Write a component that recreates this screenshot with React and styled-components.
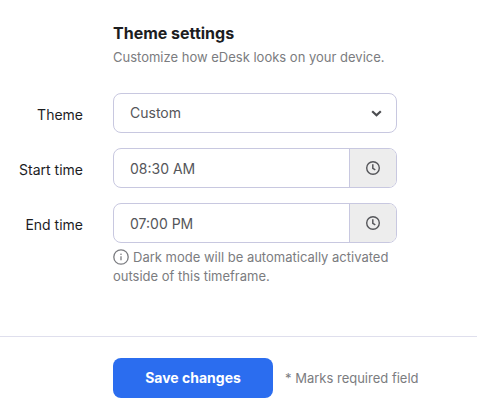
import React, { useState } from "react";
import styled, { createGlobalStyle } from "styled-components";

const GlobalStyle = createGlobalStyle`
  * {
    box-sizing: border-box;
  }

  body {
    margin: 0;
    background: #fff;
    color: #1c1d1f;
    font-family: Inter, "Liberation Sans", sans-serif;
    font-size: 14px;
    line-height: 20px;
  }
`;

const Form = styled.form`
  width: 100%;
`;

const Settings = styled.div`
  display: grid;
  grid-template-columns: 83px minmax(0, 1fr);
  column-gap: 30px;
  row-gap: 15px;
  padding: 22px 80px 50px 0;
`;

const Heading = styled.header`
  grid-column: 2;
  margin-bottom: 10px;
`;

const Title = styled.h1`
  margin: 0 0 2px;
  font-size: 16px;
  font-weight: 700;
  line-height: 22px;
`;

const Muted = styled.p`
  margin: 0;
  color: #7b7c80;
  font-size: 13px;
  line-height: ${(props) => (props.$tight ? "19px" : "22px")};
`;

const Label = styled.label`
  padding-top: 12px;
  text-align: right;
`;

const Control = styled.div`
  display: flex;
  align-items: center;
  height: 40px;
  overflow: hidden;
  border: 1px solid #c8c8e0;
  border-radius: 8px;
  background: #fff;

  &:focus-within {
    border-color: #2b6def;
  }
`;

const SelectControl = styled(Control)`
  display: grid;

  > * {
    grid-area: 1 / 1;
  }
`;

const Select = styled.select`
  width: 100%;
  height: 38px;
  padding: 0 40px 0 16px;
  border: 0;
  outline: 0;
  appearance: none;
  background: transparent;
  color: #55565a;
  font: inherit;
`;

const Chevron = styled.svg`
  justify-self: end;
  margin-right: 14px;
  pointer-events: none;
`;

const TimeInput = styled.input`
  flex: 1;
  min-width: 0;
  height: 38px;
  padding: 0 16px;
  border: 0;
  outline: 0;
  background: transparent;
  color: #55565a;
  font: inherit;
`;

const ClockButton = styled.button`
  display: flex;
  align-items: center;
  justify-content: center;
  width: 47px;
  height: 38px;
  padding: 0;
  border: 0;
  border-left: 1px solid #c8c8e0;
  background: #ededed;
  color: #55565a;
  cursor: pointer;
`;

const Hint = styled(Muted)`
  padding-top: 5px;
`;

const InfoIcon = styled.svg`
  margin-right: 4px;
  vertical-align: -3px;
`;

const Footer = styled.footer`
  display: flex;
  align-items: center;
  gap: 12px;
  padding: 21px 0 21px 113px;
  border-top: 1px solid #dfdfed;
`;

const SaveButton = styled.button`
  width: 160px;
  height: 40px;
  border: 0;
  border-radius: 8px;
  background: #2b6def;
  color: #fff;
  font: inherit;
  font-weight: 700;
  cursor: pointer;
`;

const TimeControl = ({ id, label, value, onChange }) => (
  <Control>
    <TimeInput
      id={id}
      type="text"
      value={value}
      onChange={(e) => onChange(e.target.value)}
    />
    <ClockButton type="button" aria-label={label}>
      <svg width="16" height="16" viewBox="0 0 16 16" fill="none">
        <circle cx="8" cy="8" r="6.3" stroke="currentColor" strokeWidth="1.4" />
        <path
          d="M7.8 4.3V8.3L10.3 9.9"
          stroke="currentColor"
          strokeWidth="1.5"
        />
      </svg>
    </ClockButton>
  </Control>
);

const App = () => {
  const [theme, setTheme] = useState("custom");
  const [startTime, setStartTime] = useState("08:30 AM");
  const [endTime, setEndTime] = useState("07:00 PM");

  return (
    <>
      <GlobalStyle />
      <Form onSubmit={(e) => e.preventDefault()}>
        <Settings>
          <Heading>
            <Title>Theme settings</Title>
            <Muted>Customize how eDesk looks on your device.</Muted>
          </Heading>

          <Label htmlFor="theme">Theme</Label>
          <SelectControl>
            <Select
              id="theme"
              value={theme}
              onChange={(e) => setTheme(e.target.value)}
            >
              <option value="custom">Custom</option>
            </Select>
            <Chevron width="12" height="12" viewBox="0 0 12 12" fill="none">
              <path d="M2.2 4.2L6.5 8.3L10.8 4.2" stroke="#4b4c50" strokeWidth="2.2" />
            </Chevron>
          </SelectControl>

          <Label htmlFor="start-time">Start time</Label>
          <TimeControl
            id="start-time"
            label="Choose start time"
            value={startTime}
            onChange={setStartTime}
          />

          <Label htmlFor="end-time">End time</Label>
          <div>
            <TimeControl
              id="end-time"
              label="Choose end time"
              value={endTime}
              onChange={setEndTime}
            />
            <Hint $tight>
              <InfoIcon width="16" height="16" viewBox="0 0 16 16" fill="none">
                <circle cx="8" cy="8" r="7.2" stroke="currentColor" strokeWidth="1.3" />
                <path d="M8 7.2V11.2" stroke="currentColor" strokeWidth="1.3" />
                <circle cx="8" cy="5.2" r="0.8" fill="currentColor" />
              </InfoIcon>
              Dark mode will be automatically activated outside of this
              timeframe.
            </Hint>
          </div>
        </Settings>

        <Footer>
          <SaveButton type="submit">Save changes</SaveButton>
          <Muted>* Marks required field</Muted>
        </Footer>
      </Form>
    </>
  );
};

export default App;
